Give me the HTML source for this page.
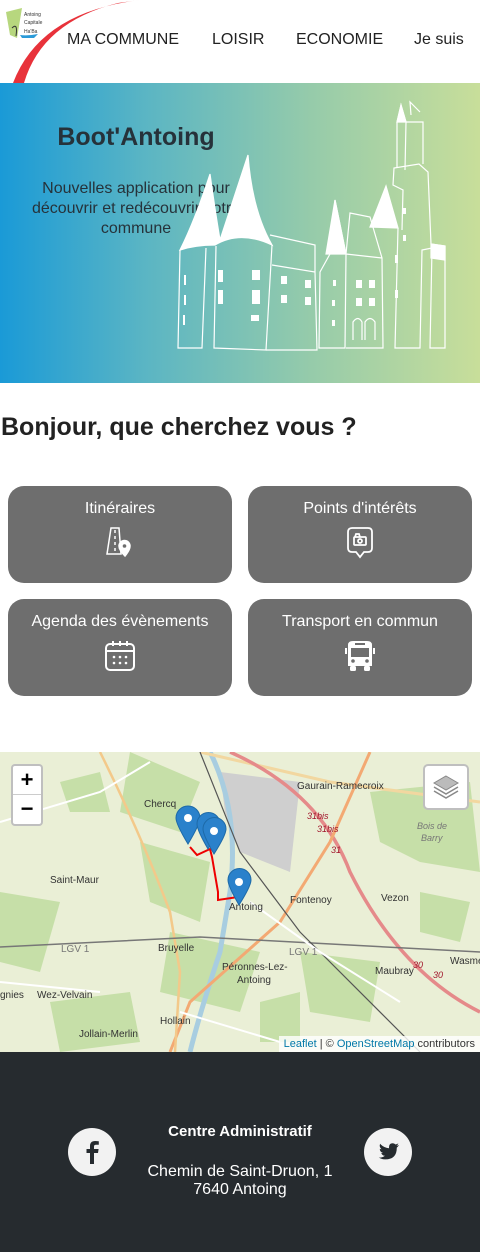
<!DOCTYPE html>
<html><head><meta charset="utf-8">
<style>
*{margin:0;padding:0;box-sizing:border-box}
body{width:480px;height:1252px;overflow:hidden;font-family:"Liberation Sans",sans-serif;background:#fff;position:relative}
.nav{position:absolute;top:0;left:0;width:480px;height:83px;background:#fff}
.nav a{position:absolute;top:31px;font-size:16px;color:#222;text-decoration:none;white-space:nowrap}
.hero{position:absolute;top:83px;left:0;width:480px;height:300px;background:linear-gradient(90deg,#1a9ad7 0%,#5ab5c4 30%,#96cbaa 65%,#c8de9a 100%)}
.hero h1{position:absolute;left:0;width:272px;top:40px;text-align:center;font-size:25px;font-weight:bold;color:#26323a}
.hero p{position:absolute;left:20px;width:232px;top:96px;text-align:center;font-size:16px;line-height:20px;color:#26323a}
h2{position:absolute;top:413px;left:1px;font-size:25px;font-weight:bold;color:#222}
.btn{position:absolute;width:224px;height:97px;background:#6e6e6e;border-radius:16px;color:#fff;text-align:center;font-size:16px;padding-top:14px}
.btn svg{display:block;margin:8px auto 0}
.map{position:absolute;top:752px;left:0;width:480px;height:300px;background:#eaefd6;overflow:hidden}
.footer{position:absolute;top:1052px;left:0;width:480px;height:200px;background:#262b2f;color:#fff}
.circ{position:absolute;width:48px;height:48px;border-radius:50%;background:#f2f2f2}
</style></head><body>
<div class="nav">
<svg width="160" height="83" style="position:absolute;left:0;top:0">
<path d="M13 83 Q40 12 140 0 L118 3 Q42 22 24 83Z" fill="#e8323a"/>
<path d="M6 12 L22 8 L17 38 L10 35Z" fill="#b7d77e"/>
<path d="M12 28 Q18 22 16 36" stroke="#333" fill="none" stroke-width="1"/>
<path d="M20 35 Q28 36 38 34 L34 38 L22 38Z" fill="#2a9ad8"/>
<text x="24" y="16" font-size="5" fill="#333">Antoing</text>
<text x="24" y="24" font-size="5" fill="#333">Capitale</text>
<text x="24" y="33" font-size="5" fill="#333">Ha'Ba</text>
</svg>
<a style="left:67px">MA COMMUNE</a>
<a style="left:212px">LOISIR</a>
<a style="left:296px">ECONOMIE</a>
<a style="left:414px">Je suis</a>
</div>
<div class="hero">
<h1>Boot'Antoing</h1>
<p>Nouvelles application pour découvrir et redécouvrir votre commune</p>
<svg width="310" height="260" viewBox="0 0 310 260" style="position:absolute;left:170px;top:17px" fill="none" stroke="#fff" stroke-width="1.2">
<path d="M10 150 Q25 120 40 74 Q45 110 50 140 Q60 110 78 55 Q82 110 102 145 Q70 130 45 145 Q25 145 10 150Z" fill="#fff"/>
<path d="M10 150 L8 248 L32 248 L36 148 M46 146 L44 248 L96 250 L102 145"/>
<path d="M102 165 L145 172 L147 250 L96 250 M100 135 L145 145 L145 172"/>
<path d="M150 172 L160 154 L165 100 L176 154 L175 248 L149 248Z"/>
<path d="M156 154 L165 100 L176 154Z" fill="#fff"/>
<path d="M176 154 L180 113 L200 117 L212 158 L213 248 L176 248 M176 154 L212 158"/>
<path d="M200 127 L216 86 L228 128Z" fill="#fff"/>
<path d="M228 128 L225 248 L250 248 L252 150 L262 148 L260 248 L275 248 L275 146 L261 144 L258 72 L249 64 L224 68 L223 85 L233 90 L232 130"/>
<path d="M227 22 L231 5 L236 22 M236 22 L235 70 M227 22 L227 68 M236 22 L253 22 L253 64 M241 15 L240 2 L250 12"/>
<path d="M227 22 L231 5 L236 22Z" fill="#fff"/>
<path d="M261 144 L275 146 L275 160 L261 158Z" fill="#fff"/>
<g fill="#fff" stroke="none">
<rect x="14" y="175" width="2" height="10"/><rect x="14" y="195" width="2" height="10"/><rect x="13" y="215" width="2" height="10"/>
<rect x="48" y="170" width="5" height="12"/><rect x="48" y="190" width="5" height="14"/><rect x="82" y="170" width="8" height="10"/><rect x="82" y="190" width="8" height="14"/><rect x="81" y="215" width="8" height="6"/>
<rect x="111" y="176" width="6" height="8"/><rect x="111" y="195" width="6" height="8"/><rect x="135" y="180" width="6" height="8"/><rect x="135" y="197" width="6" height="8"/>
<rect x="186" y="180" width="6" height="8"/><rect x="199" y="180" width="6" height="8"/><rect x="186" y="198" width="6" height="8"/><rect x="199" y="198" width="6" height="8"/>
<rect x="163" y="180" width="3" height="6"/><rect x="162" y="200" width="3" height="6"/><rect x="162" y="220" width="3" height="6"/>
<rect x="232" y="108" width="4" height="6"/><rect x="233" y="135" width="3" height="6"/><rect x="225" y="155" width="3" height="8"/><rect x="225" y="190" width="3" height="8"/>
</g>
<path d="M183 240 L183 222 Q188 215 192 222 L192 240 M195 240 L195 222 Q200 215 205 222 L205 240"/>
</svg>
</div>
<h2>Bonjour, que cherchez vous ?</h2>
<div class="btn" style="left:8px;top:486px">Itinéraires
<svg width="30" height="32" viewBox="0 0 30 32" fill="none" stroke="#fff" stroke-width="1.5"><path d="M6 2 L14 2 L16 28 L2 28Z"/><path d="M10 4v3M10 10v3M10 16v3M10 22v3"/><path d="M20 30 Q14 24 14 20 a5 5 0 0 1 11 0 Q25 24 20 30Z" fill="#fff"/><circle cx="19.5" cy="20" r="1.8" fill="#6e6e6e" stroke="none"/></svg></div>
<div class="btn" style="left:248px;top:486px">Points d'intérêts
<svg width="28" height="34" viewBox="0 0 28 34" fill="none" stroke="#fff" stroke-width="1.8"><path d="M6 2 H22 Q26 2 26 6 V22 Q26 26 22 26 H18 L14 31 L10 26 H6 Q2 26 2 22 V6 Q2 2 6 2Z"/><rect x="8" y="11" width="12" height="8" rx="1"/><path d="M9 11 L10 8 H13 L14 11"/><circle cx="14" cy="15" r="2"/></svg></div>
<div class="btn" style="left:8px;top:599px">Agenda des évènements
<svg width="34" height="34" viewBox="0 0 34 34" fill="none" stroke="#fff" stroke-width="2"><rect x="3" y="5" width="28" height="26" rx="4"/><path d="M3 12 H31 M10 2 V7 M24 2 V7 M17 2 V7"/><g fill="#fff" stroke="none"><circle cx="11" cy="18" r="1.3"/><circle cx="17" cy="18" r="1.3"/><circle cx="23" cy="18" r="1.3"/><circle cx="11" cy="24" r="1.3"/><circle cx="17" cy="24" r="1.3"/><circle cx="23" cy="24" r="1.3"/></g></svg></div>
<div class="btn" style="left:248px;top:599px">Transport en commun
<svg width="30" height="34" viewBox="0 0 30 34"><path d="M3 6 Q3 2 8 2 H22 Q27 2 27 6 V27 H3Z" fill="#fff"/><rect x="5" y="27" width="6" height="5" rx="1.5" fill="#fff"/><rect x="19" y="27" width="6" height="5" rx="1.5" fill="#fff"/><rect x="6" y="9" width="18" height="9" fill="#6e6e6e"/><rect x="10" y="4" width="10" height="2" fill="#6e6e6e"/><circle cx="8" cy="22" r="1.8" fill="#6e6e6e"/><circle cx="22" cy="22" r="1.8" fill="#6e6e6e"/><rect x="0" y="9" width="2" height="6" fill="#fff"/><rect x="28" y="9" width="2" height="6" fill="#fff"/></svg></div>

<div class="map">
<svg width="480" height="300" style="position:absolute;left:0;top:0" font-family="Liberation Sans" font-size="10" fill="#333">
<g fill="#c6dfa8"><path d="M130 0 L200 30 L180 80 L120 60Z"/><path d="M140 90 L210 110 L200 170 L150 150Z"/><path d="M370 40 L470 30 L480 120 L420 110 L380 90Z"/><path d="M0 140 L60 150 L40 220 L0 210Z"/><path d="M170 180 L260 200 L240 260 L160 240Z"/><path d="M300 200 L380 210 L370 270 L310 260Z"/><path d="M50 250 L130 240 L140 290 L60 300Z"/><path d="M60 30 L100 20 L110 60 L70 60Z"/><path d="M420 140 L470 150 L460 190 L420 180Z"/><path d="M260 250 L300 240 L300 290 L260 290Z"/></g>
<path d="M220 20 L300 30 L290 120 L240 100 L225 60Z" fill="#cfcfcf"/>
<path d="M210 0 Q240 60 230 140 L220 200 Q200 260 190 300" stroke="#a8cde0" stroke-width="5" fill="none"/>
<path d="M200 0 L330 30 L480 50" stroke="#f2d7a0" stroke-width="3" fill="none"/>
<path d="M230 0 Q320 40 350 120 Q400 220 480 260" stroke="#e58a8a" stroke-width="3.5" fill="none"/>
<path d="M370 0 L330 90 L280 170 L190 250 L170 300" stroke="#f3a973" stroke-width="3" fill="none"/>
<path d="M100 0 Q140 80 170 160 L180 220 L175 300" stroke="#f3c98a" stroke-width="2.5" fill="none"/>
<path d="M0 195 L200 185 L480 200" stroke="#777" stroke-width="1.5" fill="none"/>
<path d="M200 0 L240 100 L300 180 L420 300" stroke="#555" stroke-width="1.2" fill="none"/>
<path d="M0 70 L100 40 L150 10 M0 230 L100 240 M180 260 L280 290 M250 150 L320 200 L400 250" stroke="#fff" stroke-width="2" fill="none"/>
<path d="M190 95 L197 103 L210 97 L212 105 L218 140 L218 148 L238 145" stroke="#e00" stroke-width="2" fill="none"/>
<text x="144" y="55">Chercq</text><text x="297" y="37">Gaurain-Ramecroix</text><text x="50" y="131">Saint-Maur</text><text x="290" y="151">Fontenoy</text><text x="381" y="149">Vezon</text>
<text x="229" y="158">Antoing</text><text x="158" y="199">Bruyelle</text><text x="222" y="218">Péronnes-Lez-</text><text x="237" y="231">Antoing</text>
<text x="37" y="246">Wez-Velvain</text><text x="160" y="272">Hollain</text><text x="79" y="285">Jollain-Merlin</text><text x="375" y="222">Maubray</text><text x="450" y="212">Wasme</text><text x="0" y="246">gnies</text>
<text x="61" y="200" fill="#777">LGV 1</text><text x="289" y="203" fill="#777">LGV 1</text>
<g fill="#a0142a" font-style="italic" font-size="9"><text x="307" y="67">31bis</text><text x="317" y="80">31bis</text><text x="331" y="101">31</text><text x="413" y="216">30</text><text x="433" y="226">30</text></g>
<text x="417" y="77" fill="#777" font-style="italic" font-size="9">Bois de</text><text x="421" y="89" fill="#777" font-style="italic" font-size="9">Barry</text>
<g fill="#2a81cb" stroke="#1d6aa8"><path d="M188 92 Q176 72 176 66 a12 12 0 0 1 24 0 Q200 72 188 92Z"/><path d="M208 97 Q197 78 197 72 a11.5 11.5 0 0 1 23 0 Q220 78 208 97Z"/><path d="M214 102 Q203 83 203 77 a11.5 11.5 0 0 1 23 0 Q226 83 214 102Z"/><path d="M239 153 Q228 134 228 128 a11.5 11.5 0 0 1 23 0 Q251 134 239 153Z"/></g>
<g fill="#fff"><circle cx="188" cy="66" r="4"/><circle cx="214" cy="79" r="4"/><circle cx="239" cy="130" r="4"/></g>
</svg>
<div style="position:absolute;left:11px;top:12px;width:32px;height:62px;background:#fff;border:2px solid rgba(0,0,0,.25);border-radius:4px;font-size:22px;font-weight:bold;text-align:center;line-height:28px;color:#000">+<div style="border-top:1px solid #ccc;line-height:28px">−</div></div>
<div style="position:absolute;left:423px;top:12px;width:46px;height:46px;background:#fff;border:2px solid rgba(0,0,0,.25);border-radius:5px"><svg width="42" height="42" viewBox="0 0 42 42"><path d="M21 10 L33 17 L21 24 L9 17Z" fill="#bbb" stroke="#888"/><path d="M9 21 L21 28 L33 21 M9 25 L21 32 L33 25" fill="none" stroke="#888" stroke-width="1.5"/></svg></div>
<div style="position:absolute;right:0;bottom:0;background:rgba(255,255,255,.8);font-size:11px;padding:2px 5px;color:#333"><span style="color:#0078a8">Leaflet</span> | © <span style="color:#0078a8">OpenStreetMap</span> contributors</div>
</div>

<div class="footer">
<div class="circ" style="left:68px;top:76px"><svg width="48" height="48" viewBox="0 0 48 48"><path d="M26 36 V25 H30 L30.6 21 H26 V18.5 Q26 16.8 28 16.8 H30.8 V13.3 Q29 13 27 13 Q22 13 22 18 V21 H18.5 V25 H22 V36Z" fill="#262b2f"/></svg></div>
<div style="position:absolute;left:0;width:480px;top:71px;text-align:center;font-size:15px;font-weight:bold">Centre Administratif</div>
<div style="position:absolute;left:0;width:480px;top:111px;text-align:center;font-size:16px;line-height:18px">Chemin de Saint-Druon, 1<br>7640 Antoing</div>
<div class="circ" style="left:364px;top:76px"><svg width="48" height="48" viewBox="0 0 48 48"><path d="M35 17 Q33.8 17.6 32.5 17.7 Q33.9 16.9 34.4 15.4 Q33.1 16.2 31.6 16.5 Q30.4 15.2 28.6 15.2 Q25 15.2 25 19.3 Q25 19.8 25.1 20.2 Q19.7 20 16.2 15.8 Q14.8 18.8 17.5 21.3 Q16.6 21.3 15.8 20.9 Q15.8 24.1 19 24.9 Q18.1 25.2 17.2 25 Q18.1 27.7 21 27.8 Q18.4 29.9 14.8 29.5 Q17.7 31.4 21.2 31.4 Q32.8 31.4 32.8 19.6 Q34.1 18.6 35 17Z" fill="#262b2f"/></svg></div>
</div>
</body></html>
